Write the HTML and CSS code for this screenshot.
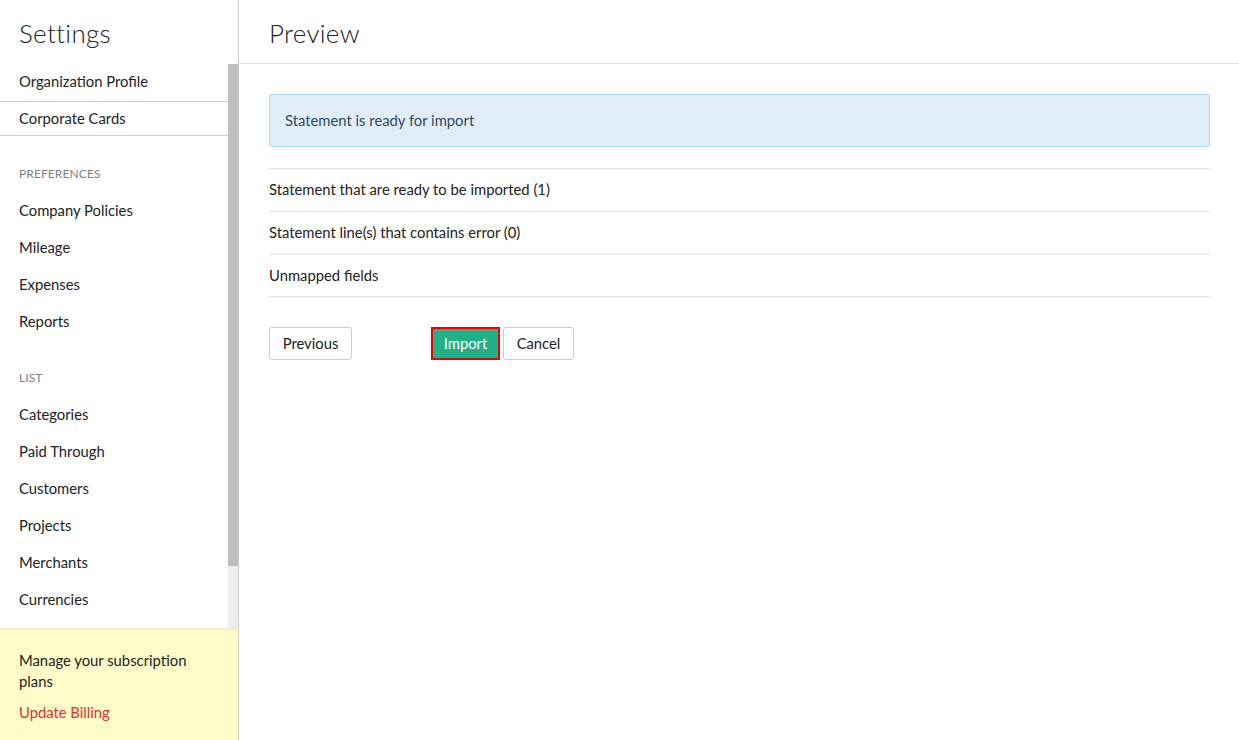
FILE: index.html
```html
<!DOCTYPE html>
<html>
<head>
<meta charset="utf-8">
<link rel="stylesheet" href="styles.css">
</head>
<body>
<div class="app">
  <aside class="sidebar">
    <div class="side-title">Settings</div>
    <div class="side-scroll">
      <nav class="side-nav">
        <a class="nav-item boxed first">Organization Profile</a>
        <a class="nav-item boxed">Corporate Cards</a>
        <div class="nav-head">PREFERENCES</div>
        <a class="nav-item">Company Policies</a>
        <a class="nav-item">Mileage</a>
        <a class="nav-item">Expenses</a>
        <a class="nav-item">Reports</a>
        <div class="nav-head">LIST</div>
        <a class="nav-item">Categories</a>
        <a class="nav-item">Paid Through</a>
        <a class="nav-item">Customers</a>
        <a class="nav-item">Projects</a>
        <a class="nav-item">Merchants</a>
        <a class="nav-item">Currencies</a>
      </nav>
      <div class="scrollbar"><div class="thumb"></div></div>
    </div>
    <div class="billing">
      <div class="billing-text">Manage your subscription plans</div>
      <a class="billing-link">Update Billing</a>
    </div>
  </aside>
  <main class="main">
    <header class="main-head">Preview</header>
    <section class="content">
      <div class="alert">Statement is ready for import</div>
      <div class="rows">
        <div class="row">Statement that are ready to be imported (1)</div>
        <div class="row">Statement line(s) that contains error (0)</div>
        <div class="row">Unmapped fields</div>
      </div>
      <div class="actions">
        <button class="btn btn-prev">Previous</button>
        <div class="right-actions">
          <button class="btn btn-primary">Import</button>
          <button class="btn btn-cancel">Cancel</button>
        </div>
      </div>
    </section>
  </main>
</div>
</body>
</html>
```
FILE: styles.css
```css
* { box-sizing: border-box; }
html, body { margin: 0; padding: 0; height: 100%; }
body {
  font-family: "Lato", "Open Sans", sans-serif;
  font-size: 14.8px;
  color: #222;
  background: #fff;
}
.app { display: flex; height: 740px; overflow: hidden; }
.sidebar {
  width: 239px;
  flex: 0 0 239px;
  border-right: 1px solid #ccc;
  display: flex;
  flex-direction: column;
}
.side-title {
  height: 64px;
  padding: 17px 0 0 19px;
  font-size: 26px;
  font-weight: 300;
  color: #222;
  letter-spacing: 0.3px;
}
.side-scroll { display: flex; flex: 1; min-height: 0; }
.side-nav { flex: 1; display: flex; flex-direction: column; }
.nav-item {
  display: block;
  flex: 0 0 auto;
  height: 37px;
  line-height: 36px;
  padding-left: 19px;
  color: #222;
}
.nav-item.boxed { border-bottom: 1px solid #ccc; height: 34px; line-height: 33px; }
.nav-item.boxed.first { height: 38px; line-height: 34px; }
.nav-head {
  flex: 0 0 auto;
  padding: 30px 0 0 19px;
  height: 56px;
  font-size: 12px;
  color: #808080;
  letter-spacing: 0.1px;
}
.scrollbar {
  width: 10px;
  flex: 0 0 10px;
  background: #eee;
  display: flex;
  flex-direction: column;
}
.thumb { height: 502px; background: #c1bdbd; }
.billing {
  height: 112px;
  background: #fffcca;
  border-top: 2px solid #f3efcb;
  padding: 20px 19px 0 19px;
}
.billing-text { line-height: 21px; color: #222; width: 180px; }
.billing-link { display: block; margin-top: 11px; color: #e0322f; }
.main { flex: 1; display: flex; flex-direction: column; }
.main-head {
  height: 64px;
  border-bottom: 1px solid #ddd;
  padding: 17px 0 0 30px;
  font-size: 26px;
  font-weight: 300;
  color: #222;
  letter-spacing: 0.3px;
}
.content { padding: 30px 29px 0 30px; }
.alert {
  height: 53px;
  background: #e1eef9;
  border: 1px solid #a9dff1;
  border-radius: 2px;
  padding: 0 15px;
  line-height: 51px;
  color: #2c4a63;
}
.rows { margin-top: 21px; border-top: 1px solid #e3e3e3; }
.row {
  height: 43px;
  line-height: 40px;
  border-bottom: 1px solid #e3e3e3;
  color: #222;
}
.row:last-child { height: 42px; }
.actions { display: flex; margin-top: 30px; }
.right-actions { display: flex; gap: 3px; margin-left: 79px; }
.btn {
  font-family: inherit;
  font-size: 14.8px;
  height: 33px;
  padding: 0 0 2px;
  background: #fff;
  color: #222;
  border: 1px solid #ccc;
  border-radius: 3px;
  cursor: pointer;
}
.btn-prev { width: 83px; }
.btn-primary {
  background: #21b087;
  color: #fff;
  border: 2px solid #ee0000;
  border-radius: 0;
  width: 69px;
}
.btn-cancel { width: 71px; }
```
